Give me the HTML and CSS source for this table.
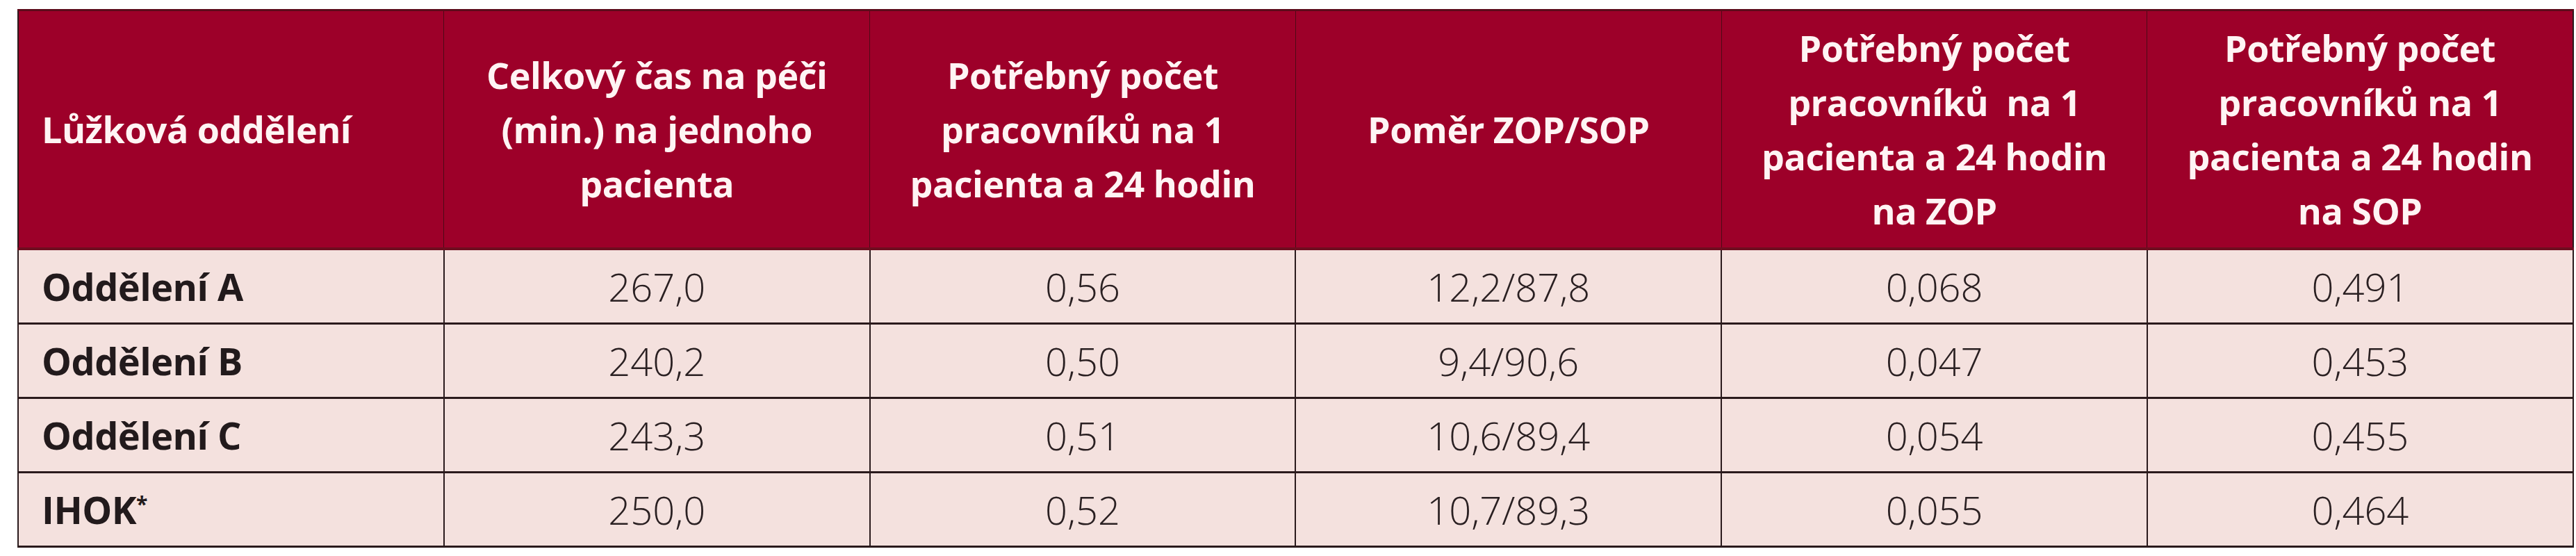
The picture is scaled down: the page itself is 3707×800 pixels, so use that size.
FILE: index.html
```html
<!DOCTYPE html>
<html lang="cs">
<head>
<meta charset="utf-8">
<title>Lůžková oddělení</title>
<link rel="stylesheet" href="styles.css">
</head>
<body>
<table class="data">
  <colgroup>
    <col class="c"><col class="c"><col class="c"><col class="c"><col class="c"><col class="c">
  </colgroup>
  <thead>
    <tr>
      <th class="first">Lůžková oddělení</th>
      <th>Celkový čas na péči<br>(min.) na jednoho<br>pacienta</th>
      <th>Potřebný počet<br>pracovníků na 1<br>pacienta a 24 hodin</th>
      <th>Poměr ZOP/SOP</th>
      <th>Potřebný počet<br>pracovníků&nbsp; na 1<br>pacienta a 24 hodin<br>na ZOP</th>
      <th>Potřebný počet<br>pracovníků na 1<br>pacienta a 24 hodin<br>na SOP</th>
    </tr>
  </thead>
  <tbody>
    <tr><td class="name">Oddělení A</td><td>267,0</td><td>0,56</td><td>12,2/87,8</td><td>0,068</td><td>0,491</td></tr>
    <tr><td class="name">Oddělení B</td><td>240,2</td><td>0,50</td><td>9,4/90,6</td><td>0,047</td><td>0,453</td></tr>
    <tr><td class="name">Oddělení C</td><td>243,3</td><td>0,51</td><td>10,6/89,4</td><td>0,054</td><td>0,455</td></tr>
    <tr><td class="name">IHOK<sup class="star">*</sup></td><td>250,0</td><td>0,52</td><td>10,7/89,3</td><td>0,055</td><td>0,464</td></tr>
  </tbody>
</table>
</body>
</html>
```

FILE: styles.css
```css
html, body {
  margin: 0;
  padding: 0;
  background: #ffffff;
}

body {
  padding: 13px 0 0 25px;
  font-family: "Open Sans", "Liberation Sans", sans-serif;
}

.data {
  border-collapse: collapse;
  table-layout: fixed;
  width: 3677px;
  border-left: 2px solid #2a1a1c;
  border-right: 2px solid #2a1a1c;
  border-bottom: 3px solid #2a1a1c;
}

.data .c {
  width: 612.8px;
}

.data thead th {
  background: #9d0029;
  color: #fff4f4;
  font-weight: 700;
  font-size: 52px;
  line-height: 78px;
  letter-spacing: -0.5px;
  text-align: center;
  vertical-align: middle;
  height: 340px;
  padding: 0 20px;
  border-top: 3px solid #5c0b1a;
  border-bottom: 4px solid #6e0d1f;
  border-left: 1px solid #4e0a16;
  border-right: 1px solid #4e0a16;
}

.data thead th.first {
  text-align: left;
  padding-left: 33px;
}

.data tbody td {
  background: #f4e1de;
  color: #2a2022;
  font-weight: 300;
  font-size: 56px;
  line-height: 60px;
  text-align: center;
  vertical-align: middle;
  height: 104px;
  padding: 0 10px;
  border-top: 3px solid #2a1a1c;
  border-left: 2px solid #2a1a1c;
  border-right: 2px solid #2a1a1c;
}

.data tbody tr:first-child td {
  border-top: none;
}

.data tbody td.name {
  text-align: left;
  padding-left: 33px;
  font-weight: 700;
  font-size: 54px;
  letter-spacing: -0.5px;
  color: #221a1c;
}

.star {
  font-size: 30px;
  vertical-align: 18px;
  line-height: 0;
}
```
